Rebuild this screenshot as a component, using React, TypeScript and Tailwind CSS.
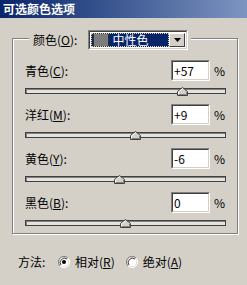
import React from "react";

const rows = [
  { name: "青色", key: "C", value: "+57", pos: 157 },
  { name: "洋红", key: "M", value: "+9", pos: 110 },
  { name: "黄色", key: "Y", value: "-6", pos: 94 },
  { name: "黑色", key: "B", value: "0", pos: 100 },
];

function Thumb({ pos }: { pos: number }) {
  return (
    <svg
      width="11"
      height="9"
      viewBox="0 0 11 9"
      className="absolute top-[-2px]"
      style={{ left: pos - 6 }}
    >
      <polygon points="0.5,8.5 0.5,4.5 5.5,0.5 10.5,4.5 10.5,8.5" fill="#d4d0c8" stroke="#404040" />
      <polyline points="1.5,8 1.5,5 5.5,1.7" fill="none" stroke="#ffffff" />
      <polyline points="9.5,5 9.5,7.5 1.5,7.5" fill="none" stroke="#808080" />
    </svg>
  );
}

function Radio({ checked }: { checked: boolean }) {
  return (
    <svg width="12" height="12" viewBox="0 0 12 12">
      <circle cx="6" cy="6" r="5.5" fill="#d4d0c8" />
      <path d="M10 2 A5.5 5.5 0 0 0 2 10" fill="none" stroke="#808080" />
      <path d="M2 10 A5.5 5.5 0 0 0 10 2" fill="none" stroke="#ffffff" />
      <circle cx="6" cy="6" r="4.5" fill="#ffffff" />
      <path d="M9 3 A4.3 4.3 0 0 0 3 9" fill="none" stroke="#404040" />
      {checked && <circle cx="6" cy="6" r="2" fill="#000" />}
    </svg>
  );
}

export default function App() {
  return (
    <div className="w-[247px] h-[285px] bg-[#d4d0c8] font-['Noto_Sans_CJK_SC',sans-serif] text-[12px] leading-[14px] text-black overflow-hidden">
      <div className="h-[18px] bg-gradient-to-r from-[#0a246a] to-[#7e95c0] text-white font-bold pl-[3px] leading-[18px]">
        可选颜色选项
      </div>
      <div className="pt-[20px] pl-[12px]">
        <div className="relative w-[226px] h-[196px] border border-[#808080] shadow-[inset_1px_1px_0_#fff,1px_1px_0_#fff] pt-[21px] pl-[12px] pr-[11px]">
          <div className="absolute top-[-9px] left-[16px] flex items-center bg-[#d4d0c8] pl-[4px] pr-[3px]">
            <span>
              颜色(<u>O</u>):
            </span>
            <div className="ml-[11px] w-[100px] h-[20px] border border-t-[#808080] border-l-[#808080] border-b-white border-r-white">
              <div className="h-full flex bg-white p-[1px] border border-t-[#404040] border-l-[#404040] border-b-[#d4d0c8] border-r-[#d4d0c8]">
                <div className="flex-1 flex items-center gap-[3px] pl-[2px] bg-[#0a246a] text-white outline outline-1 outline-dotted outline-[#d8d8b0] -outline-offset-1">
                  <div className="w-[16px] h-[14px] bg-[#7c7c7c] border border-[#303030]"></div>
                  <span>中性色</span>
                </div>
                <div className="w-[16px] h-full flex items-center justify-center bg-[#d4d0c8] border border-t-white border-l-white border-b-[#404040] border-r-[#404040]">
                  <svg width="7" height="4" viewBox="0 0 7 4">
                    <polygon points="0,0 7,0 3.5,4" fill="#000" />
                  </svg>
                </div>
              </div>
            </div>
          </div>

          {rows.map((r) => (
            <div key={r.key} className="mb-[10px]">
              <div className="flex items-center h-[21px]">
                <span className="flex-1">
                  {r.name}(<u>{r.key}</u>):
                </span>
                <div className="w-[39px] h-[21px] border border-t-[#808080] border-l-[#808080] border-b-white border-r-white">
                  <div className="h-full bg-white border border-t-[#404040] border-l-[#404040] border-b-[#d4d0c8] border-r-[#d4d0c8] pl-[1px] flex items-center">
                    {r.value}
                  </div>
                </div>
                <span className="w-[16px] pl-[4px]">%</span>
              </div>
              <div className="relative mt-[7px] h-[6px] border border-t-[#404040] border-l-[#404040] border-b-[#404040] border-r-[#404040] bg-[#e4e2dc] shadow-[inset_1px_1px_0_#808080]">
                <Thumb pos={r.pos} />
              </div>
            </div>
          ))}
        </div>
        <div className="flex items-center h-[14px] mt-[21px] pl-[6px]">
          <span className="w-[40px]">方法:</span>
          <Radio checked={true} />
          <span className="ml-[5px]">
            相对(<u>R</u>)
          </span>
          <span className="ml-[11px] flex items-center">
            <Radio checked={false} />
          </span>
          <span className="ml-[5px]">
            绝对(<u>A</u>)
          </span>
        </div>
      </div>
    </div>
  );
}
